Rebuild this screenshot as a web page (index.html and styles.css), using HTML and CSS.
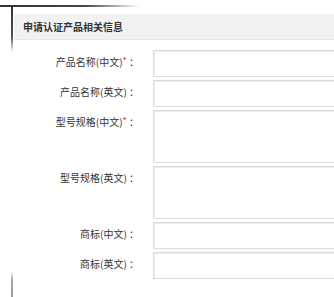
FILE: index.html
```html
<!DOCTYPE html>
<html lang="zh-CN">
<head>
    <meta charset="UTF-8">
    <meta name="viewport" content="width=device-width, initial-scale=1.0">
    <title>申请认证产品相关信息</title>
    <link rel="stylesheet" href="styles.css">
</head>
<body>
    <div class="top-rule"></div>
    <div class="frame">
        <div class="side-rule"></div>
        <div class="panel">
            <div class="panel-title">申请认证产品相关信息</div>

            <form class="info-form">
                <label class="field-label" for="nameCn">产品名称(中文)<span class="req">*</span> ：</label>
                <input class="field-input" type="text" id="nameCn">

                <label class="field-label" for="nameEn">产品名称(英文) ：</label>
                <input class="field-input" type="text" id="nameEn">

                <label class="field-label" for="modelCn">型号规格(中文)<span class="req">*</span> ：</label>
                <textarea class="field-area" id="modelCn"></textarea>

                <label class="field-label" for="modelEn">型号规格(英文) ：</label>
                <textarea class="field-area" id="modelEn"></textarea>

                <label class="field-label" for="brandCn">商标(中文) ：</label>
                <input class="field-input" type="text" id="brandCn">

                <label class="field-label" for="brandEn">商标(英文) ：</label>
                <input class="field-input" type="text" id="brandEn">
            </form>
        </div>
    </div>
</body>
</html>
```

FILE: styles.css
```css
html, body {
    height: 100%;
}

body {
    margin: 0;
    overflow: hidden;
    background: #fff;
    font-family: "Noto Sans CJK SC", "Noto Sans", sans-serif;
    color: #333;
}

.top-rule {
    height: 2px;
    width: 140px;
    margin-top: 5px;
    background: linear-gradient(to right, #333 0, #444 60%, rgba(0, 0, 0, 0) 100%);
}

.frame {
    display: flex;
    height: calc(100% - 7px);
}

.side-rule {
    flex: none;
    width: 2px;
    margin-left: 11px;
    background: linear-gradient(to bottom, #333 0, #555 30px, rgba(0, 0, 0, 0) 45px, rgba(0, 0, 0, 0) 265px, #aaa 272px, #999 100%);
}

.panel {
    flex: 1;
    min-width: 0;
    padding-top: 7px;
    margin-left: 1px;
    overflow: hidden;
}

.panel-title {
    height: 25px;
    line-height: 25px;
    padding-left: 9px;
    background: #f2f2f2;
    border-bottom: 1px solid #e9e9e9;
    font-size: 10px;
    font-weight: bold;
    color: #333;
    white-space: nowrap;
}

.info-form {
    display: grid;
    grid-template-columns: 125px 200px;
    column-gap: 14px;
    row-gap: 3px;
    margin-top: 10px;
}

.field-label {
    padding-top: 6px;
    line-height: 12px;
    font-size: 10px;
    text-align: right;
    white-space: nowrap;
    color: #333;
}

.req {
    color: #e22;
    font-size: 9px;
    vertical-align: top;
    line-height: 9px;
}

.field-input,
.field-area {
    box-sizing: border-box;
    width: 200px;
    margin: 0;
    border: 1px solid #dcdcdc;
    box-shadow: inset 1px 1px 0 #ececec;
    background: #fff;
    font-family: inherit;
    font-size: 10px;
}

.field-input {
    height: 27px;
}

.field-area {
    height: 53px;
    resize: none;
}
```
